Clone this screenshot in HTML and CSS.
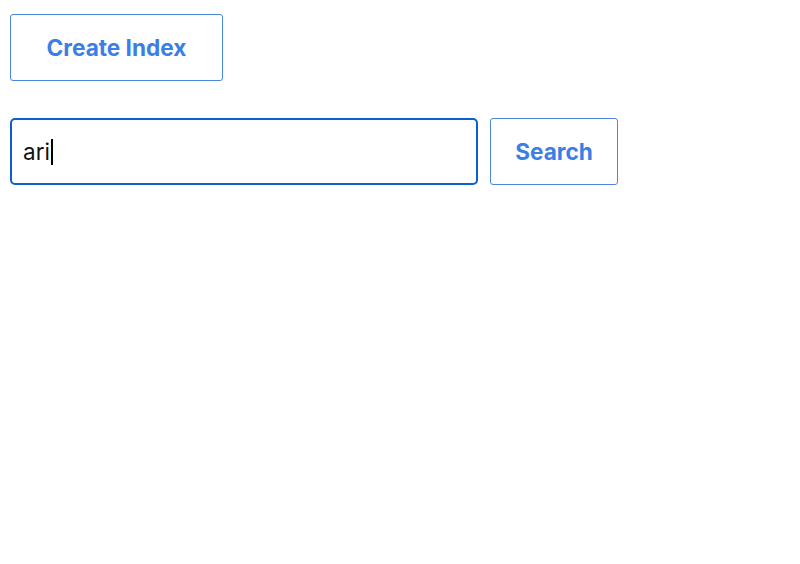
FILE: index.html
```html
<!DOCTYPE html>
<html>
<head>
<meta charset="utf-8">
<link rel="stylesheet" href="styles.css">
</head>
<body>
<div class="page">
  <div class="row">
    <button class="btn btn-create">Create Index</button>
  </div>
  <div class="row search-row">
    <div class="search-input"><span class="typed">ari</span><span class="caret"></span></div>
    <button class="btn btn-search">Search</button>
  </div>
</div>
</body>
</html>
```
FILE: styles.css
```css
html, body {
  margin: 0;
  padding: 0;
  background: #fff;
}
.page {
  padding: 14px 10px;
  display: flex;
  flex-direction: column;
  gap: 36px;
  font-family: Inter, "Liberation Sans", sans-serif;
}
.row {
  display: flex;
  align-items: center;
}
.search-row {
  gap: 12px;
  margin-top: 1px;
}
.btn {
  font-family: Inter, "Liberation Sans", sans-serif;
  font-size: 22.6px;
  font-weight: 700;
  color: #3b7ee6;
  background: #fff;
  border: 1px solid #4a86e0;
  border-radius: 3px;
  height: 67px;
  box-sizing: border-box;
  cursor: pointer;
  padding: 0;
}
.btn-create {
  width: 213px;
}
.btn-search {
  width: 128px;
}
.search-input {
  width: 468px;
  height: 67px;
  box-sizing: border-box;
  border: 2px solid #0d5fcc;
  border-radius: 5px;
  padding: 0 11px;
  display: flex;
  align-items: center;
  font-size: 22.5px;
  color: #111;
}
.caret {
  display: inline-block;
  width: 2px;
  height: 26px;
  background: #000;
  margin-left: 1px;
}
```
